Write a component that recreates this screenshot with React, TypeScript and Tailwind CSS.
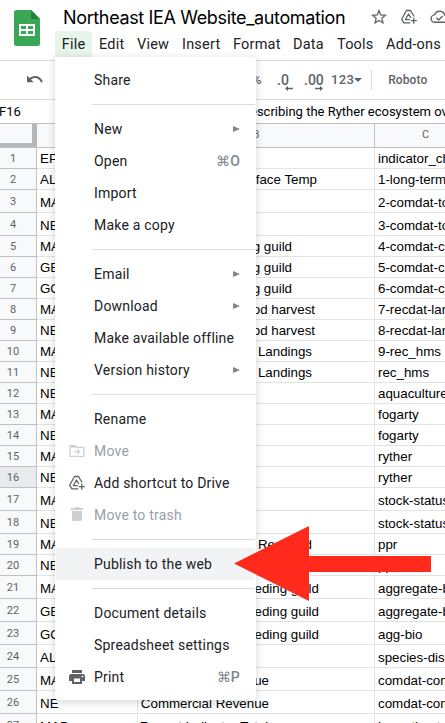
import React from "react";

const ARIAL = "font-['Liberation_Sans',Arial,sans-serif]";

// [number, height, column A, column B, right inset of column B text, column C]
type Row = [number, number, string, string, number, string];
const rows: Row[] = [
  [1, 21, "EPU", "", 0, "indicator_chunk"],
  [2, 21, "ALL", "Long-term Sea Surface Temp", 57, "1-long-term-sst"],
  [3, 23, "MAB", "", 0, "2-comdat-total"],
  [4, 23, "NE", "", 0, "3-comdat-total"],
  [5, 21, "MAB", "Landings by feeding guild", 82, "4-comdat-council"],
  [6, 21, "GB", "Landings by feeding guild", 82, "5-comdat-council"],
  [7, 21, "GOM", "Landings by feeding guild", 82, "6-comdat-council"],
  [8, 21, "MAB", "Recreational seafood harvest", 59, "7-recdat-landings"],
  [9, 21, "NE", "Recreational seafood harvest", 59, "8-recdat-landings"],
  [10, 21, "MAB", "Recreational Landings", 62, "9-rec_hms"],
  [11, 21, "NE", "Recreational Landings", 62, "rec_hms"],
  [12, 21, "NE", "", 0, "aquaculture"],
  [13, 21, "MAB", "", 0, "fogarty"],
  [14, 21, "NE", "", 0, "fogarty"],
  [15, 21, "MAB", "", 0, "ryther"],
  [16, 21, "NE", "", 0, "ryther"],
  [17, 23, "MAB", "", 0, "stock-status"],
  [18, 23, "NE", "", 0, "stock-status"],
  [19, 21, "MAB", "Production Required", 62, "ppr"],
  [20, 21, "NE", "", 0, "ppr"],
  [21, 23, "MAB", "Biomass by feeding guild", 55, "aggregate-biomass"],
  [22, 23, "GB", "Biomass by feeding guild", 55, "aggregate-biomass"],
  [23, 23, "GOM", "Biomass by feeding guild", 55, "agg-bio"],
  [24, 23, "ALL", "", 0, "species-dist"],
  [25, 23, "MAB", "Commercial Revenue", 105, "comdat-commercial"],
  [26, 23, "NE", "Commercial Revenue", 105, "comdat-commercial"],
  [27, 23, "MAB", "Recent Indicator Totals", 99, "hp-estimates"],
];

type Item = { label: string; arrow?: boolean; keys?: string; icon?: "move" | "drive" | "trash" | "print"; off?: boolean; active?: boolean };
const groups: Item[][] = [
  [{ label: "Share" }],
  [{ label: "New", arrow: true }, { label: "Open", keys: "⌘O" }, { label: "Import" }, { label: "Make a copy" }],
  [{ label: "Email", arrow: true }, { label: "Download", arrow: true }, { label: "Make available offline" }, { label: "Version history", arrow: true }],
  [{ label: "Rename" }, { label: "Move", icon: "move", off: true }, { label: "Add shortcut to Drive", icon: "drive" }, { label: "Move to trash", icon: "trash", off: true }],
  [{ label: "Publish to the web", active: true }],
  [{ label: "Document details" }, { label: "Spreadsheet settings" }, { label: "Print", icon: "print", keys: "⌘P" }],
];

function DriveAdd() {
  return (
    <svg width="18" height="18" viewBox="0 0 18 18" fill="none" stroke="#5f6368" strokeWidth="1.3" strokeLinejoin="round">
      <path d="M10.300 14.800H3.900L1.700 11.300 6.500 2.500h4l3.600 6" />
      <path d="M9.800 11.700H5.300L8.500 6l2.300 3.800" />
      <path d="M13.800 9.700v6M10.800 12.700h6" />
    </svg>
  );
}

function MenuIcon({ kind }: { kind?: Item["icon"] }) {
  if (kind === "drive") return <DriveAdd />;
  if (kind === "move")
    return (
      <svg width="18" height="18" viewBox="0 0 18 18" fill="none" stroke="#cdcfd1" strokeWidth="1.3">
        <path d="M2 3.700h4.800l1.500 1.600h7.500v9H2z" strokeLinejoin="round" />
        <path d="M2 4.600h5.200" strokeWidth="2" />
        <path d="M6 9.700h5.500M9.200 7.300l2.400 2.400-2.400 2.400" />
      </svg>
    );
  if (kind === "trash")
    return (
      <svg width="18" height="18" viewBox="0 0 18 18" fill="#cdcfd1">
        <path d="M3 2h3.200l1-1h3.600l1 1H15v2H3zM4 5h10v8.500a1.500 1.500 0 0 1-1.500 1.500h-7A1.500 1.500 0 0 1 4 13.500z" />
      </svg>
    );
  if (kind === "print")
    return (
      <svg width="18" height="18" viewBox="0 0 18 18" fill="#5f6368">
        <path fillRule="evenodd" d="M4 2h10v3H4zM3.200 6h11.600A2.200 2.200 0 0 1 17 8.200V13h-3v3H4v-3H1V8.200A2.200 2.200 0 0 1 3.200 6zM6 10.500V14h6v-3.500zM13.700 7.700v1.500h1.500V7.700z" />
      </svg>
    );
  return null;
}

function FileMenu() {
  return (
    <div className="absolute left-[55px] top-[57px] z-10 h-[643px] w-[201px] rounded-tr-[4px] rounded-b-[3px] bg-white px-px py-[7px] shadow-[0_2px_6px_2px_rgba(60,64,67,0.15)]">
      {groups.map((g, i) => (
        <div key={i}>
          {i > 0 && <div className="my-2 ml-9 h-px bg-[#dadce0]" />}
          {g.map((it) => (
            <div key={it.label} className={`flex h-8 items-center pl-3 pr-[15px] ${it.active ? "bg-[#f1f3f4]" : ""}`}>
              <div className="w-[26px] shrink-0"><MenuIcon kind={it.icon} /></div>
              <span className={`flex-1 whitespace-nowrap text-[14px] leading-5 tracking-[0.2px] ${it.off ? "text-[#9aa0a6]" : "text-[#202124]"}`}>{it.label}</span>
              {it.arrow && <span className="mb-px border-y-[3.5px] border-l-[7px] border-y-transparent border-l-[#80868b]" />}
              {it.keys && <span className="text-[14px] font-medium tracking-[0.2px] text-[#80868b]">{it.keys}</span>}
            </div>
          ))}
        </div>
      ))}
    </div>
  );
}

export default function App() {
  return (
    <div className="relative h-[723px] w-[445px] overflow-hidden bg-white font-[Roboto,sans-serif] text-[#202124]">
      <header className="flex h-[61px] border-b border-[#dadce0]">
        <div className="w-[55px] shrink-0 pl-[14px] pt-[10px]">
          <svg width="26" height="36" viewBox="0 0 26 36">
            <path d="M2.500 0H17l9 9v24.500a2.500 2.500 0 0 1-2.500 2.500h-21A2.500 2.500 0 0 1 0 33.500v-31A2.500 2.500 0 0 1 2.500 0z" fill="#3aa757" />
            <path d="M17 0l9 9h-9z" fill="#21803c" />
            <path fillRule="evenodd" d="M5 14h16v12H5zM7 16v3h5v-3zM14 16v3h5v-3zM7 21v3h5v-3zM14 21v3h5v-3z" fill="white" />
          </svg>
        </div>
        <div className="min-w-0 flex-1">
          <div className="flex h-[31px] items-center pl-2 pt-[3px]">
            <span className="w-[308px] shrink-0 whitespace-nowrap font-[Inter,sans-serif] text-[18px] tracking-[-0.36px] text-black">Northeast IEA Website_automation</span>
            <svg className="shrink-0" width="16" height="16" viewBox="0 0 16 16" fill="none" stroke="#5f6368" strokeWidth="1.300">
              <path d="M8 1.700l1.750 4.300 4.650.35-3.550 3 1.100 4.500L8 11.450 4.050 13.850l1.100-4.500-3.550-3L6.250 6z" />
            </svg>
            <div className="ml-[13px] shrink-0"><DriveAdd /></div>
            <svg className="ml-3 shrink-0" width="20" height="16" viewBox="0 0 20 16" fill="none" stroke="#5f6368" strokeWidth="1.400">
              <path d="M5 13.300a3.700 3.700 0 0 1-.4-7.400A5.300 5.300 0 0 1 14.800 6.400a3.500 3.500 0 0 1 .2 6.900z" />
              <path d="M6.500 8.800l2.200 2.200 3.900-3.900" />
            </svg>
          </div>
          <nav className="flex h-[26px] items-center text-[14.5px] tracking-[0.2px]">
            <span className="flex h-full w-[37px] items-center justify-center rounded-t-[4px] bg-[#e6f4ea] pt-px">File</span>
            <span className="ml-[7px] w-[38px] pt-px">Edit</span>
            <span className="w-[45px] pt-px">View</span>
            <span className="w-[51px] pt-px">Insert</span>
            <span className="w-[60px] pt-px">Format</span>
            <span className="w-[44px] pt-px">Data</span>
            <span className="w-[49px] pt-px">Tools</span>
            <span className="whitespace-nowrap pt-px">Add-ons</span>
          </nav>
        </div>
      </header>

      <div className="flex h-[39px] items-center border-b border-[#dadce0] text-[14px] font-medium text-[#5f6368]">
        <svg className="ml-[26px]" width="18" height="12" viewBox="0 0 18 12" fill="#5f6368">
          <path d="M1 1.500v6.700h6.700L5 5.500C8.700 2.700 13.200 3.900 15 8.500l1.900-.6C14.600 1.500 8.200.3 3.500 4z" />
        </svg>
        <span className="ml-[208px] w-[25px] text-[13px]">%</span>
        <span className="relative w-[27px]">.0
          <svg className="absolute left-2 top-4" width="8" height="5" viewBox="0 0 8 5"><path d="M0 2.500L3 0v1.700h5v1.600H3V5z" fill="#5f6368" /></svg>
        </span>
        <span className="relative w-[27px]">.00
          <svg className="absolute left-[11px] top-4" width="8" height="5" viewBox="0 0 8 5"><path d="M8 2.500L5 0v1.700H0v1.600h5V5z" fill="#5f6368" /></svg>
        </span>
        <span className="text-[13px] tracking-wide">123</span>
        <span className="border-x-4 border-t-4 border-x-transparent border-t-[#5f6368]" />
        <span className="ml-[9px] h-5 w-px bg-[#dadce0]" />
        <span className="ml-4 text-[12px] tracking-[0.1px]">Roboto</span>
      </div>

      <div className="flex h-[23px] items-center text-[13px] text-black">
        <span className="-ml-px w-[251px] shrink-0">F16</span>
        <span className="shrink-0 whitespace-nowrap">escribing the Ryther ecosystem overfishing</span>
      </div>

      <div className="flex h-[25px] w-[560px] border-y border-[#c0c0c0] bg-[#f8f9fa] text-[11px] text-[#5f6368]">
        <div className="w-[37px] border-b-4 border-r-[5px] border-[#b7b7b7]" />
        <div className="w-[101px] border-r border-[#c0c0c0]" />
        <div className="flex w-[237px] items-center justify-center border-r border-[#c0c0c0]">B</div>
        <div className="flex w-[101px] items-center justify-center">C</div>
      </div>

      <div className={`w-[560px] text-[13.330px] leading-[15px] text-black ${ARIAL}`}>
        {rows.map(([n, h, a, b, inset, c]) => (
          <div key={n} className="flex" style={{ height: h }}>
            <div className={`flex w-[37px] items-center justify-center border-b border-r border-[#c0c0c0] pr-[10px] font-[Roboto] text-[11px] text-[#5f6368] ${n === 16 ? "bg-[#e8eaed]" : "bg-[#f8f9fa]"}`}>{n}</div>
            <div className="flex w-[101px] items-end border-b border-r border-[#e2e3e3] pb-[2px] pl-[3px]">{a}</div>
            <div className="flex w-[237px] items-end justify-end whitespace-nowrap border-b border-r border-[#e2e3e3] pb-[2px]">
              <span style={{ marginRight: inset }}>{b}</span>
            </div>
            <div className="flex flex-1 items-end whitespace-nowrap border-b border-[#e2e3e3] pb-[2px] pl-[3px]">{c}</div>
          </div>
        ))}
      </div>

      <FileMenu />
      <svg className="absolute left-[234px] top-[525px] z-20" width="198" height="77" viewBox="0 0 198 77">
        <path d="M0 38.500L75 1v30h122v16H75v29z" fill="#ff2a1c" />
      </svg>
    </div>
  );
}
